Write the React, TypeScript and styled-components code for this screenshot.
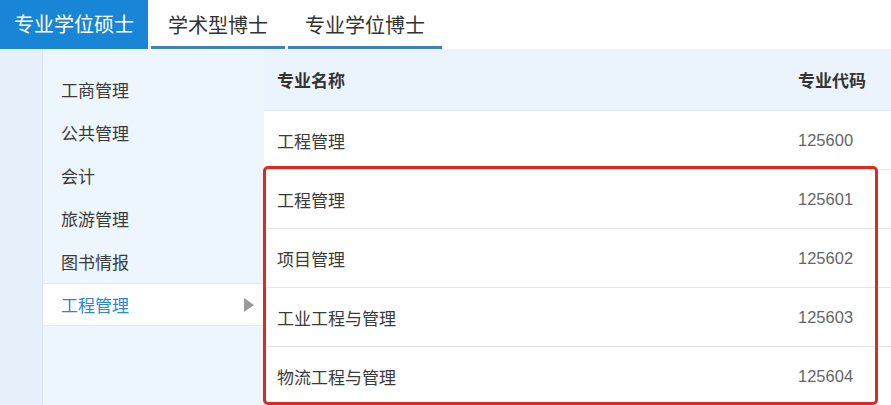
import React from "react";
import styled, { createGlobalStyle } from "styled-components";

const Global = createGlobalStyle`
  html, body { margin: 0; padding: 0; background: #fff; }
  body {
    width: 891px; height: 405px; overflow: hidden;
    font-family: "Noto Sans CJK SC", "Liberation Sans", sans-serif;
  }
  * { box-sizing: border-box; }
`;

const Page = styled.div`
  width: 891px;
  height: 405px;
  display: flex;
  flex-direction: column;
  overflow: hidden;
`;

const TabBar = styled.div`
  display: flex;
  gap: 3px;
  height: 49px;
  flex: none;
`;

const Tab = styled.div<{ $active?: boolean; $pad: number }>`
  height: 49px;
  padding: 0 ${(p) => p.$pad}px;
  display: flex;
  align-items: center;
  font-size: 20px;
  color: ${(p) => (p.$active ? "#ffffff" : "#333333")};
  background: ${(p) => (p.$active ? "#1985d6" : "#ffffff")};
  border-bottom: 3px solid ${(p) => (p.$active ? "#1985d6" : "#3f82bd")};
  padding-top: ${(p) => (p.$active ? 0 : 3)}px;
  white-space: nowrap;
`;

const Body = styled.div`
  flex: 1;
  display: flex;
  min-height: 0;
`;

const Strip = styled.div`
  width: 43px;
  flex: none;
  background: #e5f0fa;
  border-right: 1px solid #d6e4f1;
`;

const Menu = styled.div`
  width: 221px;
  flex: none;
  background: #edf5fd;
  padding-top: 19px;
  display: flex;
  flex-direction: column;
`;

const MenuItem = styled.div<{ $active?: boolean }>`
  height: 43px;
  padding-left: 18px;
  padding-right: 10px;
  display: flex;
  align-items: center;
  justify-content: space-between;
  font-size: 17px;
  color: ${(p) => (p.$active ? "#2b86d5" : "#3a3a3a")};
  background: ${(p) => (p.$active ? "#ffffff" : "transparent")};
  border-top: 1px solid ${(p) => (p.$active ? "#e2ebf3" : "transparent")};
  border-bottom: 1px solid ${(p) => (p.$active ? "#e2ebf3" : "transparent")};
`;

const Arrow = styled.span`
  width: 0;
  height: 0;
  border-top: 7px solid transparent;
  border-bottom: 7px solid transparent;
  border-left: 10px solid #9a9a9a;
`;

const Table = styled.div`
  flex: 1;
  position: relative;
  display: flex;
  flex-direction: column;
  background: #fff;
`;

const Row = styled.div<{ $head?: boolean }>`
  height: ${(p) => (p.$head ? 62 : 59)}px;
  flex: none;
  display: grid;
  grid-template-columns: 1fr 93px;
  align-items: center;
  padding-left: 13px;
  background: ${(p) => (p.$head ? "#ebf4fd" : "#ffffff")};
  border-bottom: 1px solid ${(p) => (p.$head ? "#dde8f2" : "#e6e6e6")};
`;

const NameCell = styled.div<{ $head?: boolean }>`
  font-size: 17px;
  font-weight: ${(p) => (p.$head ? 700 : 400)};
  color: ${(p) => (p.$head ? "#333333" : "#3a3a3a")};
`;

const CodeCell = styled.div<{ $head?: boolean }>`
  font-size: ${(p) => (p.$head ? 17 : 16.5)}px;
  font-family: ${(p) =>
    p.$head ? `"Noto Sans CJK SC", sans-serif` : `"Liberation Sans", Arial, sans-serif`};
  font-weight: ${(p) => (p.$head ? 700 : 400)};
  color: ${(p) => (p.$head ? "#333333" : "#666666")};
`;

const Highlight = styled.div`
  position: absolute;
  left: -1px;
  top: 117px;
  width: 615px;
  height: 239px;
  border: 3px solid #dc2a20;
  border-radius: 5px;
  pointer-events: none;
`;

const tabs = [
  { label: "专业学位硕士", active: true, pad: 14 },
  { label: "学术型博士", pad: 17 },
  { label: "专业学位博士", pad: 17 },
];

const menu = ["工商管理", "公共管理", "会计", "旅游管理", "图书情报", "工程管理"];

const rows = [
  ["工程管理", "125600"],
  ["工程管理", "125601"],
  ["项目管理", "125602"],
  ["工业工程与管理", "125603"],
  ["物流工程与管理", "125604"],
];

export default function App() {
  return (
    <Page>
      <Global />
      <TabBar>
        {tabs.map((t) => (
          <Tab key={t.label} $active={t.active} $pad={t.pad}>
            {t.label}
          </Tab>
        ))}
      </TabBar>
      <Body>
        <Strip />
        <Menu>
          {menu.map((m, i) => {
            const active = i === menu.length - 1;
            return (
              <MenuItem key={i} $active={active}>
                {m}
                {active && <Arrow />}
              </MenuItem>
            );
          })}
        </Menu>
        <Table>
          <Row $head>
            <NameCell $head>专业名称</NameCell>
            <CodeCell $head>专业代码</CodeCell>
          </Row>
          {rows.map(([n, c]) => (
            <Row key={c}>
              <NameCell>{n}</NameCell>
              <CodeCell>{c}</CodeCell>
            </Row>
          ))}
          <Highlight />
        </Table>
      </Body>
    </Page>
  );
}
